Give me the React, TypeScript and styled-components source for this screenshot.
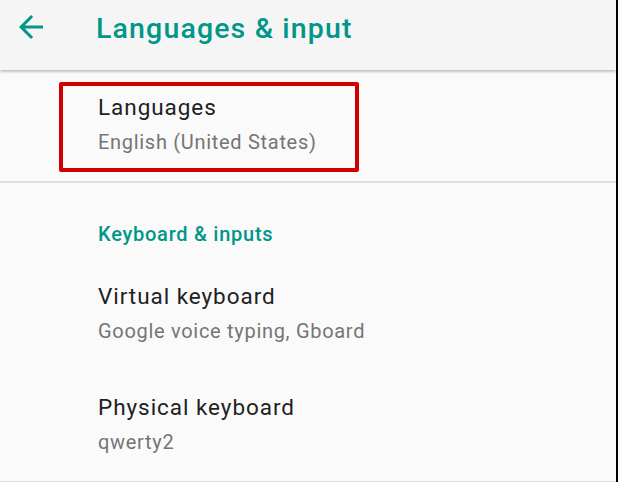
import React from "react";
import styled, { createGlobalStyle } from "styled-components";

const Global = createGlobalStyle`
  html, body { margin: 0; padding: 0; background: #fafafa; }
  body { font-family: Roboto, "Noto Sans", Arial, sans-serif; }
`;

const Screen = styled.div`
  position: relative;
  width: 616px;
  height: 482px;
  border-right: 2px solid #000;
  background: #fafafa;
  overflow: hidden;
  display: flex;
  flex-direction: column;
`;

const Toolbar = styled.header`
  position: relative;
  z-index: 1;
  height: 70px;
  flex: none;
  display: flex;
  align-items: center;
  background: #f5f5f5;
  box-shadow: 0 1px 3px rgba(0, 0, 0, 0.25), 0 2px 3px rgba(0, 0, 0, 0.08);
`;

const BackButton = styled.div`
  width: 36px;
  height: 36px;
  margin-left: 13px;
  margin-top: -16px;
  color: #009688;
  display: flex;
`;

const ToolbarTitle = styled.h1`
  margin: 0 0 0 47px;
  margin-top: -12px;
  font-size: 28.5px;
  font-weight: 500;
  line-height: 36px;
  letter-spacing: 1.15px;
  color: #009688;
`;

const List = styled.div`
  display: flex;
  flex-direction: column;
`;

const Item = styled.div`
  padding: 23px 0 25px 98px;
  display: flex;
  flex-direction: column;
`;

const ItemTitle = styled.div`
  font-size: 22.5px;
  line-height: 28px;
  letter-spacing: 0.95px;
  color: #212121;
`;

const ItemSummary = styled.div`
  margin-top: 7px;
  font-size: 20px;
  line-height: 28px;
  letter-spacing: 0.7px;
  color: #757575;
`;

const Divider = styled.div`
  height: 2px;
  background: #dedede;
`;

const Category = styled.div`
  padding: 37px 0 11px 98px;
  font-size: 20px;
  font-weight: 500;
  line-height: 28px;
  letter-spacing: 0.75px;
  color: #009688;
`;

const Highlight = styled.div`
  position: absolute;
  left: 59px;
  top: 82px;
  width: 300px;
  height: 90px;
  box-sizing: border-box;
  border: 4px solid #d10000;
  border-radius: 2px;
  pointer-events: none;
`;

const ArrowBack = () => (
  <svg viewBox="0 0 24 24" width="36" height="36" fill="currentColor">
    <path d="M20 11H7.83l5.59-5.59L12 4l-8 8 8 8 1.41-1.41L7.83 13H20v-2z" />
  </svg>
);

type Pref = { title: string; summary: string };

const Preference = ({ title, summary }: Pref) => (
  <Item>
    <ItemTitle>{title}</ItemTitle>
    <ItemSummary>{summary}</ItemSummary>
  </Item>
);

export default function App() {
  return (
    <>
      <Global />
      <Screen>
        <Toolbar>
          <BackButton>
            <ArrowBack />
          </BackButton>
          <ToolbarTitle>Languages &amp; input</ToolbarTitle>
        </Toolbar>
        <List>
          <Preference title="Languages" summary="English (United States)" />
          <Divider />
          <Category>Keyboard &amp; inputs</Category>
          <Preference title="Virtual keyboard" summary="Google voice typing, Gboard" />
          <Preference title="Physical keyboard" summary="qwerty2" />
          <Divider />
        </List>
        <Highlight />
      </Screen>
    </>
  );
}
